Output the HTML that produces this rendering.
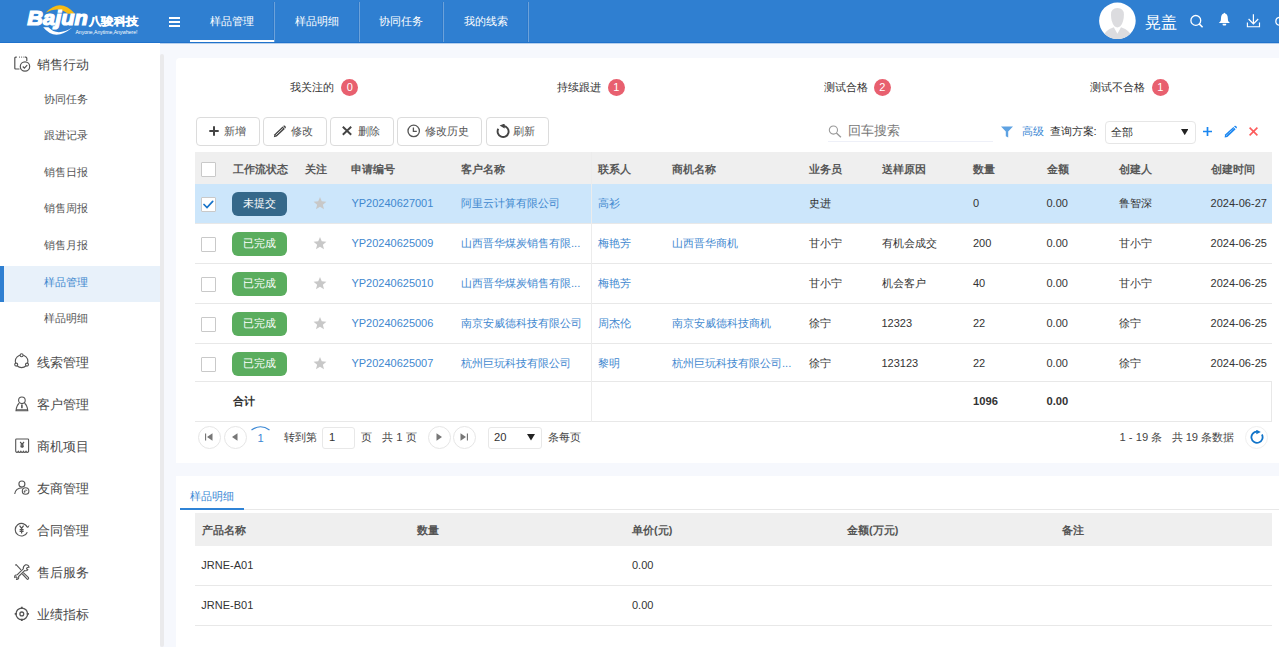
<!DOCTYPE html>
<html><head><meta charset="utf-8">
<style>
*{box-sizing:border-box;margin:0;padding:0}
html,body{width:1279px;height:647px;overflow:hidden;background:#f6f8fd;font-family:"Liberation Sans",sans-serif;font-size:12px;color:#333}
#hdr{position:absolute;left:0;top:0;width:1279px;height:43px;background:#2f7fd1}
#hdrb{position:absolute;left:0;top:42px;width:1279px;height:1px;background:#1f72cc}
#hdrs{position:absolute;left:0;top:43px;width:1279px;height:1px;background:#b7d0ec}
#side{position:absolute;left:0;top:43px;width:160px;height:604px;background:#fff}
.sb{position:absolute;left:160px;top:54px;width:3.6px;height:593px;background:#eaeaec;border-radius:2px}
.card{position:absolute;background:#fff;border-radius:4px}
.t{position:absolute;white-space:nowrap;line-height:1}
.tab{position:absolute;top:1px;height:41px;color:#fff;font-size:11.1px;line-height:41px;text-align:center}
.tsep{position:absolute;top:2px;width:1px;height:40px;background:#6ca2da;box-shadow:-1px 0 0 #2a77c9}
.mi{position:absolute;left:44px;font-size:11.45px;color:#555;line-height:1}
.gi{position:absolute;left:37px;font-size:12.8px;color:#4a4a4a;line-height:1}
.ico{position:absolute}
.btn{position:absolute;top:117px;height:29px;border:1px solid #dcdcdc;border-radius:4px;background:#fff;font-size:12px;color:#555;line-height:27px}
.badge{position:absolute;width:17px;height:17px;border-radius:50%;background:#e8606f;color:#fff;font-size:11px;line-height:17px;text-align:center}
.th{position:absolute;font-weight:bold;color:#555;font-size:12px;line-height:1}
.td{position:absolute;font-size:12px;color:#333;line-height:1}
.lk{color:#3f88cf}
.cb{position:absolute;width:15px;height:15px;border:1px solid #c9c9c9;border-radius:1px;background:#fff}
.st{position:absolute;width:55px;height:23.4px;border-radius:6px;color:#fff;font-size:12px;line-height:23.4px;text-align:center}
.hl{position:absolute;height:1px;background:#e8e8e8}
.pgb{position:absolute;width:22px;height:22px;border-radius:50%;border:1px solid #e6e6e6;background:#fff}
</style></head><body>

<div id="hdr"></div><div id="hdrb"></div><div id="hdrs"></div>
<svg style="position:absolute;left:20px;top:0" width="130" height="43" viewBox="0 0 130 43">
<path d="M25.7 12.85 Q40 -2.8 55 13.7 L48 13.7 Q38 5.5 25.7 12.85 Z" fill="#f7bb12"/>
<path d="M23.2 27.3 Q35 42 52.4 27.6 Q37 37 28.5 27.3 Z" fill="#fff"/>
<text x="7.3" y="25.4" font-family="Liberation Sans" font-weight="bold" font-style="italic" font-size="20" fill="#fff" stroke="#fff" stroke-width="1.2" textLength="60.5" lengthAdjust="spacingAndGlyphs">Bajun</text>
<text x="69" y="24.6" font-weight="bold" font-size="11" fill="#fff" stroke="#fff" stroke-width="0.3" textLength="49.5" lengthAdjust="spacingAndGlyphs">八骏科技</text>
<text x="55.5" y="34" font-size="5" fill="#fff" textLength="62" lengthAdjust="spacingAndGlyphs">Anyone,Anytime,Anywhere!</text>
</svg>
<div class="ico" style="left:169px;top:17px;width:11px;height:1.6px;background:#fff"></div>
<div class="ico" style="left:169px;top:21px;width:11px;height:1.6px;background:#fff"></div>
<div class="ico" style="left:169px;top:25px;width:11px;height:1.6px;background:#fff"></div>
<div class="tab" style="left:190.0px;width:84px">样品管理</div>
<div class="tsep" style="left:274px"></div>
<div class="tab" style="left:274.5px;width:84px">样品明细</div>
<div class="tsep" style="left:359px"></div>
<div class="tab" style="left:359.0px;width:84px">协同任务</div>
<div class="tsep" style="left:443px"></div>
<div class="tab" style="left:443.5px;width:84px">我的线索</div>
<div class="tsep" style="left:528px"></div>
<div class="ico" style="left:190px;top:40px;width:84px;height:2px;background:#fff"></div>
<svg style="position:absolute;left:1098px;top:2px" width="39" height="39" viewBox="0 0 39 39">
<defs><clipPath id="avc"><circle cx="19.4" cy="18.8" r="18.3"/></clipPath></defs>
<circle cx="19.4" cy="18.8" r="18.3" fill="#fff"/>
<path d="M13 12.5 Q13 6 19.4 6 Q25.9 6 25.9 12.5 Q25.9 20.5 22.3 24.3 Q19.4 26.6 16.5 24.3 Q13 20.5 13 12.5 Z" fill="#dcdcdf"/>
<path d="M3 40 L4 36 Q6.5 28.3 15.8 25.2 L19.4 31.8 L23 25.2 Q32.3 28.3 34.8 36 L35.8 40 Z" fill="#dcdcdf" clip-path="url(#avc)"/>
</svg>
<div class="t" style="left:1145px;top:13.5px;font-size:16.2px;color:#fff">晃盖</div>
<svg style="position:absolute;left:1189px;top:14px" width="16" height="16" viewBox="0 0 16 16">
<circle cx="6.8" cy="6.4" r="4.9" fill="none" stroke="#fff" stroke-width="1.3"/>
<path d="M10.2 9.9 L13.6 13.3" stroke="#fff" stroke-width="1.5"/></svg>
<svg style="position:absolute;left:1217px;top:12px" width="15" height="15" viewBox="0 0 15 15">
<path d="M7.4 0.7 Q7.9 0.7 8.1 1.5 Q10.6 2.4 10.8 6 L11 8.6 Q11.4 10 13 11.1 L1.8 11.1 Q3.4 10 3.8 8.6 L4 6 Q4.2 2.4 6.7 1.5 Q6.9 0.7 7.4 0.7 Z" fill="#fff"/>
<path d="M5.6 11.8 H9.2 V12.6 Q9.2 13.5 8.3 13.5 H6.5 Q5.6 13.5 5.6 12.6 Z" fill="#fff"/></svg>
<svg style="position:absolute;left:1246px;top:13px" width="15" height="16" viewBox="0 0 15 16">
<path d="M7.4 1.2 L7.4 10.8 M2.6 6 L7.4 10.8 L12.2 6" fill="none" stroke="#fff" stroke-width="1.2"/>
<path d="M1.4 9.6 L1.4 13.7 L13.5 13.7 L13.5 9.6" fill="none" stroke="#fff" stroke-width="1.15"/></svg>
<svg style="position:absolute;left:1274px;top:14px" width="5" height="14" viewBox="0 0 5 14">
<path d="M6.5 3.2 Q1.8 3.2 1.8 7.2 Q1.8 11.2 6.5 11.2" fill="none" stroke="#fff" stroke-width="1.2"/></svg>
<div id="side"></div><div class="sb"></div>
<div class="ico" style="left:0;top:266px;width:160px;height:35.7px;background:#e8f1fa"></div>
<div class="ico" style="left:0;top:266px;width:4px;height:35.7px;background:#2f7fd1"></div>
<div class="gi" style="top:59.3px">销售行动</div>
<div class="mi" style="top:93.8px;color:#555">协同任务</div>
<div class="mi" style="top:129.8px;color:#555">跟进记录</div>
<div class="mi" style="top:166.8px;color:#555">销售日报</div>
<div class="mi" style="top:202.8px;color:#555">销售周报</div>
<div class="mi" style="top:239.8px;color:#555">销售月报</div>
<div class="mi" style="top:276.8px;color:#3f88cf">样品管理</div>
<div class="mi" style="top:312.8px;color:#555">样品明细</div>
<div class="gi" style="top:357px">线索管理</div>
<div class="gi" style="top:399px">客户管理</div>
<div class="gi" style="top:441px">商机项目</div>
<div class="gi" style="top:483px">友商管理</div>
<div class="gi" style="top:525px">合同管理</div>
<div class="gi" style="top:567px">售后服务</div>
<div class="gi" style="top:609px">业绩指标</div>
<svg style="position:absolute;left:13px;top:55px" width="19" height="19" viewBox="0 0 19 19" fill="none" stroke="#555" stroke-width="1.2">
<path d="M6.5 14 H2.8 Q1.8 14 1.8 13 V3.2 Q1.8 2.2 2.8 2.2 H3.8"/><path d="M11.8 2.2 H12.8 Q13.8 2.2 13.8 3.2 V6"/>
<path d="M6 2.2 H6.8 M8.3 2.2 H9.1 M10.5 2.2 H11.2"/>
<circle cx="12" cy="11.5" r="4.7"/><path d="M9.8 11.5 L11.4 13.1 L14.2 10.2"/></svg>
<svg style="position:absolute;left:13px;top:353.3px" width="18" height="18" viewBox="0 0 18 18" fill="none" stroke="#555" stroke-width="1.1">
<circle cx="8.6" cy="8.3" r="6.3"/><circle cx="8.6" cy="2.3" r="1.5" fill="#fff"/><circle cx="3.2" cy="11.6" r="1.5" fill="#fff"/><circle cx="14" cy="11.6" r="1.5" fill="#fff"/></svg>
<svg style="position:absolute;left:13px;top:395.3px" width="18" height="18" viewBox="0 0 18 18" fill="none" stroke="#555" stroke-width="1.1">
<circle cx="8.9" cy="5.3" r="3.3"/><path d="M6.2 8.3 Q3.5 10.5 3 15.8 H14.8 Q14.3 10.5 11.6 8.3"/><path d="M3 14.8 H14.8"/><path d="M8.9 9.5 V13.2" stroke-width="1.6"/></svg>
<svg style="position:absolute;left:13px;top:437.3px" width="18" height="18" viewBox="0 0 18 18" fill="none" stroke="#555" stroke-width="1.1">
<path d="M2.7 14.4 V2.8 Q2.7 2 3.5 2 H14.8 Q15.6 2 15.6 2.8 V14.4 q-1.29 2.2 -2.58 0 q-1.29 2.2 -2.58 0 q-1.29 2.2 -2.58 0 q-1.29 2.2 -2.58 0 q-1.29 2.2 -2.58 0"/>
<path d="M7.2 5 L9.1 7.3 L11 5 M9.1 7.3 V11 M7.4 8.2 H10.8 M7.4 9.6 H10.8" stroke-width="1.2"/></svg>
<svg style="position:absolute;left:13px;top:479.3px" width="18" height="18" viewBox="0 0 18 18" fill="none" stroke="#555" stroke-width="1.1">
<circle cx="8.9" cy="5" r="3"/><path d="M1.7 15 Q2.5 9 9.5 8.8"/><circle cx="12.6" cy="12" r="3.3"/><path d="M11 12.5 Q12.2 10.4 14.2 11.3 M11.9 13.8 L11 12.5 L12.6 12.3" stroke-width="0.9"/></svg>
<svg style="position:absolute;left:13px;top:521.3px" width="18" height="18" viewBox="0 0 18 18" fill="none" stroke="#555" stroke-width="1.1">
<path d="M14.3 6.2 A6.3 6.3 0 1 0 14.3 11.2"/><path d="M13 4.3 L14.8 6.6 L15.9 4.5" stroke-width="1"/>
<path d="M6.6 4.6 L8.6 7.4 L10.6 4.6 M8.6 7.4 V12.6 M6.6 8.6 H10.6 M6.6 10.4 H10.6" stroke-width="1.2"/></svg>
<svg style="position:absolute;left:13px;top:563.3px" width="18" height="18" viewBox="0 0 18 18" fill="none" stroke="#555" stroke-width="1.1">
<path d="M2.2 2.3 L3.2 1.7 L8 6.8"/><path d="M10.3 9.6 L15.5 14.6 Q16 15.6 15 16.2 L14.4 16.4 L9.3 11"/>
<path d="M12.6 1.8 Q15.5 1.5 16 4.2 L14.2 4.4 L13.5 5.8 L14.8 6.7 Q13.7 8.3 11.6 7.6 L5.6 13.5 Q6.2 16.4 3.6 16.5 L4.2 14.8 L3.3 13.8 L1.7 14.4 Q1.3 11.7 4.3 11.7 L10.3 5.9 Q9.9 3.2 12.6 1.8 Z"/></svg>
<svg style="position:absolute;left:13px;top:605.3px" width="18" height="18" viewBox="0 0 18 18" fill="none" stroke="#555" stroke-width="1.3">
<circle cx="8.8" cy="8.9" r="5.8"/><circle cx="8.8" cy="8.9" r="1.9"/><path d="M8.8 1.8 V4 M8.8 13.8 V16 M1.7 8.9 H3.9 M13.7 8.9 H15.9" stroke-width="1.8"/></svg>
<div class="card" style="left:176.3px;top:58.3px;width:1110px;height:404.3px;border-radius:4px 4px 0 0"></div>
<div class="card" style="left:176.3px;top:475.6px;width:1110px;height:200px;border-radius:0"></div>
<div class="t" style="left:290px;top:81.5px;font-size:11.2px;color:#333">我关注的</div>
<div class="badge" style="left:341.2px;top:78.5px">0</div>
<div class="t" style="left:557px;top:81.5px;font-size:11.2px;color:#333">持续跟进</div>
<div class="badge" style="left:607.7px;top:78.5px">1</div>
<div class="t" style="left:823.5px;top:81.5px;font-size:11.2px;color:#333">测试合格</div>
<div class="badge" style="left:873.9px;top:78.5px">2</div>
<div class="t" style="left:1090px;top:81.5px;font-size:11.2px;color:#333">测试不合格</div>
<div class="badge" style="left:1151.7px;top:78.5px">1</div>
<div class="btn" style="left:196px;width:63.5px"></div>
<div class="t" style="left:224.4px;top:126px;font-size:11.2px;color:#555">新增</div>
<div class="btn" style="left:263px;width:63.5px"></div>
<div class="t" style="left:291.3px;top:126px;font-size:11.2px;color:#555">修改</div>
<div class="btn" style="left:330px;width:63.5px"></div>
<div class="t" style="left:357.9px;top:126px;font-size:11.2px;color:#555">删除</div>
<div class="btn" style="left:397px;width:84.5px"></div>
<div class="t" style="left:424.9px;top:126px;font-size:11.2px;color:#555">修改历史</div>
<div class="btn" style="left:485.5px;width:63.5px"></div>
<div class="t" style="left:513.3px;top:126px;font-size:11.2px;color:#555">刷新</div>
<svg style="position:absolute;left:208.5px;top:125.5px" width="10" height="10" viewBox="0 0 10 10"><path d="M5 0.3V9.7M0.3 5H9.7" stroke="#444" stroke-width="2"/></svg>
<svg style="position:absolute;left:273px;top:124.5px" width="14" height="13" viewBox="0 0 14 13"><path d="M0.8 12.3 L1.5 9.2 L9.6 1.6 L11.8 3.9 L3.7 11.5 Z" fill="#444"/><path d="M10.4 0.8 Q11.2 0.1 12 0.8 L12.6 1.5 Q13.3 2.3 12.6 3.1 L12.3 3.4 L10.1 1.1 Z" fill="#444"/><path d="M2.6 10.3 L9.9 3.4" stroke="#fff" stroke-width="0.8"/></svg>
<svg style="position:absolute;left:342px;top:126px" width="10" height="9.5" viewBox="0 0 10 9.5"><path d="M0.8 0.7L9.2 8.8M9.2 0.7L0.8 8.8" stroke="#444" stroke-width="1.9"/></svg>
<svg style="position:absolute;left:407px;top:124px" width="14" height="14" viewBox="0 0 14 14"><circle cx="6.7" cy="6.9" r="5.7" fill="none" stroke="#555" stroke-width="1.3"/><path d="M6.4 3.6V7.4H9.8" fill="none" stroke="#555" stroke-width="1.3"/></svg>
<svg style="position:absolute;left:495.5px;top:124px" width="15" height="15" viewBox="0 0 15 15"><path d="M2.3 4.8 A5.5 5.5 0 1 0 7.5 2" fill="none" stroke="#444" stroke-width="1.9"/><path d="M3.6 1.6 L8.6 -0.5 L8.6 4.6 Z" fill="#444"/></svg>
<svg style="position:absolute;left:828px;top:124.5px" width="14" height="13" viewBox="0 0 14 13"><circle cx="5.4" cy="5" r="4.1" fill="none" stroke="#999" stroke-width="1.05"/><path d="M8.4 8.1 L12.9 12.3" stroke="#999" stroke-width="1.4"/></svg>
<div class="t" style="left:848px;top:123.8px;font-size:13px;color:#777">回车搜索</div>
<div class="ico" style="left:828px;top:141px;width:165px;height:1px;background:#eef0f8"></div>
<svg style="position:absolute;left:1000.5px;top:125.5px" width="12" height="12" viewBox="0 0 12 12"><path d="M0 0.5 H12 L7.2 5.5 V11.5 L4.8 10.3 V5.5 Z" fill="#5ea2e2"/></svg>
<div class="t" style="left:1022px;top:125.5px;font-size:11.2px;color:#3a87d4">高级</div>
<div class="t" style="left:1049.5px;top:125.5px;font-size:11.2px;color:#333">查询方案:</div>
<div class="ico" style="left:1104.5px;top:120.5px;width:91px;height:23.5px;border:1px solid #e6e6e6;border-radius:4px;background:#fff"></div>
<div class="t" style="left:1111px;top:126.5px;font-size:11.2px;color:#333">全部</div>
<svg style="position:absolute;left:1180.6px;top:128.6px" width="7.5" height="6.2" viewBox="0 0 8 6.5" preserveAspectRatio="none"><path d="M0 0 H8 L4 6.5 Z" fill="#222"/></svg>
<svg style="position:absolute;left:1202.8px;top:127px" width="9" height="9" viewBox="0 0 9 9"><path d="M4.5 0V9M0 4.5H9" stroke="#1a86f0" stroke-width="1.7"/></svg>
<svg style="position:absolute;left:1223.5px;top:125px" width="13.5" height="13" viewBox="0 0 13.5 13"><path d="M0.6 12.4 L1.1 9.6 L9.4 1.9 L11.6 4.2 L3.4 11.9 Z" fill="#1a86f0"/><path d="M10.2 1.1 Q11 0.3 11.9 1 L12.5 1.6 Q13.3 2.5 12.5 3.3 L12.3 3.5 L10 1.3 Z" fill="#1a86f0"/><path d="M2.2 10.6 L9.9 3.4" stroke="#fff" stroke-width="0.7" stroke-dasharray="1 0.8"/></svg>
<svg style="position:absolute;left:1248.5px;top:127px" width="9" height="9" viewBox="0 0 9 9"><path d="M0.6 0.6L8.4 8.4M8.4 0.6L0.6 8.4" stroke="#fd5b5b" stroke-width="1.6"/></svg>
<div class="ico" style="left:195px;top:152px;width:1077px;height:32px;background:#efefef"></div>
<div class="ico" style="left:195px;top:184px;width:1077px;height:39.5px;background:#cce6fb"></div>
<div class="hl" style="left:195px;top:223px;width:1077px"></div>
<div class="hl" style="left:195px;top:263px;width:1077px"></div>
<div class="hl" style="left:195px;top:303px;width:1077px"></div>
<div class="hl" style="left:195px;top:343px;width:1077px"></div>
<div class="hl" style="left:195px;top:381px;width:1077px"></div>
<div class="hl" style="left:195px;top:421px;width:1077px"></div>
<div class="ico" style="left:591px;top:152px;width:1px;height:269.5px;background:#ececec"></div>
<div class="th" style="left:232.5px;top:164px;font-size:10.9px;color:#585858">工作流状态</div>
<div class="th" style="left:305px;top:164px;font-size:10.9px;color:#585858">关注</div>
<div class="th" style="left:351.4px;top:164px;font-size:10.9px;color:#585858">申请编号</div>
<div class="th" style="left:461px;top:164px;font-size:10.9px;color:#585858">客户名称</div>
<div class="th" style="left:598px;top:164px;font-size:10.9px;color:#585858">联系人</div>
<div class="th" style="left:672px;top:164px;font-size:10.9px;color:#585858">商机名称</div>
<div class="th" style="left:808.9px;top:164px;font-size:10.9px;color:#585858">业务员</div>
<div class="th" style="left:881.5px;top:164px;font-size:10.9px;color:#585858">送样原因</div>
<div class="th" style="left:973px;top:164px;font-size:10.9px;color:#585858">数量</div>
<div class="th" style="left:1046.5px;top:164px;font-size:10.9px;color:#585858">金额</div>
<div class="th" style="left:1119px;top:164px;font-size:10.9px;color:#585858">创建人</div>
<div class="th" style="left:1210.6px;top:164px;font-size:10.9px;color:#585858">创建时间</div>
<div class="cb" style="left:201px;top:162px"></div>
<div class="cb" style="left:201px;top:196.7px"></div>
<svg style="position:absolute;left:203px;top:199.7px" width="11" height="9" viewBox="0 0 11 9"><path d="M1 4.5 L4 7.5 L9.7 1.3" fill="none" stroke="#1673c9" stroke-width="1.7" stroke-linecap="round"/></svg>
<div class="st" style="left:232px;top:192.4px;background:#35688a;font-size:11.2px">未提交</div>
<svg style="position:absolute;left:312.5px;top:196.8px" width="14" height="13" viewBox="0 0 24 23"><path d="M12 0 L15.1 7.6 L23.4 8.3 L17.1 13.7 L19.1 21.8 L12 17.4 L4.9 21.8 L6.9 13.7 L0.6 8.3 L8.9 7.6 Z" fill="#c8c8c8"/></svg>
<div class="td lk" style="left:351.4px;top:198.3px;font-size:11.0px">YP20240627001</div>
<div class="td lk" style="left:461px;top:198.3px;font-size:11.2px">阿里云计算有限公司</div>
<div class="td lk" style="left:598px;top:198.3px;font-size:11.2px">高衫</div>
<div class="td lk" style="left:672px;top:198.3px;font-size:11.2px"></div>
<div class="td" style="left:808.9px;top:198.3px;font-size:11.2px">史进</div>
<div class="td" style="left:881.5px;top:198.3px;font-size:11.2px"></div>
<div class="td" style="left:973px;top:198.3px;font-size:11.0px">0</div>
<div class="td" style="left:1046.5px;top:198.3px;font-size:11.0px">0.00</div>
<div class="td" style="left:1119px;top:198.3px;font-size:11.2px">鲁智深</div>
<div class="td" style="left:1210.6px;top:198.3px;font-size:11.0px">2024-06-27</div>
<div class="cb" style="left:201px;top:236.7px"></div>
<div class="st" style="left:232px;top:232.4px;background:#5aad5e;font-size:11.2px">已完成</div>
<svg style="position:absolute;left:312.5px;top:236.8px" width="14" height="13" viewBox="0 0 24 23"><path d="M12 0 L15.1 7.6 L23.4 8.3 L17.1 13.7 L19.1 21.8 L12 17.4 L4.9 21.8 L6.9 13.7 L0.6 8.3 L8.9 7.6 Z" fill="#c8c8c8"/></svg>
<div class="td lk" style="left:351.4px;top:238.3px;font-size:11.0px">YP20240625009</div>
<div class="td lk" style="left:461px;top:238.3px;font-size:11.2px">山西晋华煤炭销售有限...</div>
<div class="td lk" style="left:598px;top:238.3px;font-size:11.2px">梅艳芳</div>
<div class="td lk" style="left:672px;top:238.3px;font-size:11.2px">山西晋华商机</div>
<div class="td" style="left:808.9px;top:238.3px;font-size:11.2px">甘小宁</div>
<div class="td" style="left:881.5px;top:238.3px;font-size:11.2px">有机会成交</div>
<div class="td" style="left:973px;top:238.3px;font-size:11.0px">200</div>
<div class="td" style="left:1046.5px;top:238.3px;font-size:11.0px">0.00</div>
<div class="td" style="left:1119px;top:238.3px;font-size:11.2px">甘小宁</div>
<div class="td" style="left:1210.6px;top:238.3px;font-size:11.0px">2024-06-25</div>
<div class="cb" style="left:201px;top:276.7px"></div>
<div class="st" style="left:232px;top:272.4px;background:#5aad5e;font-size:11.2px">已完成</div>
<svg style="position:absolute;left:312.5px;top:276.8px" width="14" height="13" viewBox="0 0 24 23"><path d="M12 0 L15.1 7.6 L23.4 8.3 L17.1 13.7 L19.1 21.8 L12 17.4 L4.9 21.8 L6.9 13.7 L0.6 8.3 L8.9 7.6 Z" fill="#c8c8c8"/></svg>
<div class="td lk" style="left:351.4px;top:278.3px;font-size:11.0px">YP20240625010</div>
<div class="td lk" style="left:461px;top:278.3px;font-size:11.2px">山西晋华煤炭销售有限...</div>
<div class="td lk" style="left:598px;top:278.3px;font-size:11.2px">梅艳芳</div>
<div class="td lk" style="left:672px;top:278.3px;font-size:11.2px"></div>
<div class="td" style="left:808.9px;top:278.3px;font-size:11.2px">甘小宁</div>
<div class="td" style="left:881.5px;top:278.3px;font-size:11.2px">机会客户</div>
<div class="td" style="left:973px;top:278.3px;font-size:11.0px">40</div>
<div class="td" style="left:1046.5px;top:278.3px;font-size:11.0px">0.00</div>
<div class="td" style="left:1119px;top:278.3px;font-size:11.2px">甘小宁</div>
<div class="td" style="left:1210.6px;top:278.3px;font-size:11.0px">2024-06-25</div>
<div class="cb" style="left:201px;top:316.7px"></div>
<div class="st" style="left:232px;top:312.4px;background:#5aad5e;font-size:11.2px">已完成</div>
<svg style="position:absolute;left:312.5px;top:316.8px" width="14" height="13" viewBox="0 0 24 23"><path d="M12 0 L15.1 7.6 L23.4 8.3 L17.1 13.7 L19.1 21.8 L12 17.4 L4.9 21.8 L6.9 13.7 L0.6 8.3 L8.9 7.6 Z" fill="#c8c8c8"/></svg>
<div class="td lk" style="left:351.4px;top:318.3px;font-size:11.0px">YP20240625006</div>
<div class="td lk" style="left:461px;top:318.3px;font-size:11.2px">南京安威德科技有限公司</div>
<div class="td lk" style="left:598px;top:318.3px;font-size:11.2px">周杰伦</div>
<div class="td lk" style="left:672px;top:318.3px;font-size:11.2px">南京安威德科技商机</div>
<div class="td" style="left:808.9px;top:318.3px;font-size:11.2px">徐宁</div>
<div class="td" style="left:881.5px;top:318.3px;font-size:11.0px">12323</div>
<div class="td" style="left:973px;top:318.3px;font-size:11.0px">22</div>
<div class="td" style="left:1046.5px;top:318.3px;font-size:11.0px">0.00</div>
<div class="td" style="left:1119px;top:318.3px;font-size:11.2px">徐宁</div>
<div class="td" style="left:1210.6px;top:318.3px;font-size:11.0px">2024-06-25</div>
<div class="cb" style="left:201px;top:356.7px"></div>
<div class="st" style="left:232px;top:352.4px;background:#5aad5e;font-size:11.2px">已完成</div>
<svg style="position:absolute;left:312.5px;top:356.8px" width="14" height="13" viewBox="0 0 24 23"><path d="M12 0 L15.1 7.6 L23.4 8.3 L17.1 13.7 L19.1 21.8 L12 17.4 L4.9 21.8 L6.9 13.7 L0.6 8.3 L8.9 7.6 Z" fill="#c8c8c8"/></svg>
<div class="td lk" style="left:351.4px;top:358.3px;font-size:11.0px">YP20240625007</div>
<div class="td lk" style="left:461px;top:358.3px;font-size:11.2px">杭州巨玩科技有限公司</div>
<div class="td lk" style="left:598px;top:358.3px;font-size:11.2px">黎明</div>
<div class="td lk" style="left:672px;top:358.3px;font-size:11.2px">杭州巨玩科技有限公司...</div>
<div class="td" style="left:808.9px;top:358.3px;font-size:11.2px">徐宁</div>
<div class="td" style="left:881.5px;top:358.3px;font-size:11.0px">123123</div>
<div class="td" style="left:973px;top:358.3px;font-size:11.0px">22</div>
<div class="td" style="left:1046.5px;top:358.3px;font-size:11.0px">0.00</div>
<div class="td" style="left:1119px;top:358.3px;font-size:11.2px">徐宁</div>
<div class="td" style="left:1210.6px;top:358.3px;font-size:11.0px">2024-06-25</div>
<div class="td" style="left:232.5px;top:396px;font-size:11.2px;font-weight:bold">合计</div>
<div class="td" style="left:973px;top:396px;font-size:11.2px;font-weight:bold">1096</div>
<div class="td" style="left:1046.5px;top:396px;font-size:11.2px;font-weight:bold">0.00</div>
<div class="pgb" style="left:198.2px;top:426px;width:23px;height:23px"></div>
<div class="pgb" style="left:223.5px;top:426px;width:23px;height:23px"></div>
<div class="pgb" style="left:427.5px;top:426px;width:23px;height:23px"></div>
<div class="pgb" style="left:453.1px;top:426px;width:23px;height:23px"></div>
<svg style="position:absolute;left:205.3px;top:433px" width="8" height="8" viewBox="0 0 8 8"><path d="M0.5 0.5V7.5" stroke="#777" stroke-width="1.3"/><path d="M7.5 0.3V7.7L2 4Z" fill="#777"/></svg>
<svg style="position:absolute;left:231.8px;top:433px" width="6" height="8" viewBox="0 0 6 8"><path d="M5.5 0.3V7.7L0 4Z" fill="#777"/></svg>
<svg style="position:absolute;left:435.8px;top:432.8px" width="6" height="8" viewBox="0 0 6 8"><path d="M0.5 0.3V7.7L6 4Z" fill="#777"/></svg>
<svg style="position:absolute;left:460.3px;top:432.8px" width="8" height="8" viewBox="0 0 8 8"><path d="M7.5 0.5V7.5" stroke="#777" stroke-width="1.3"/><path d="M0.5 0.3V7.7L6 4Z" fill="#777"/></svg>
<svg style="position:absolute;left:250px;top:424.5px" width="21" height="6" viewBox="0 0 21 6"><path d="M1.5 5 Q10.5 -1.5 19.5 5" fill="none" stroke="#3a87d4" stroke-width="1.2"/></svg>
<div class="td" style="left:257.5px;top:432.5px;font-size:11.2px;color:#3a87d4">1</div>
<div class="td" style="left:283.6px;top:432px;font-size:11.2px;color:#444">转到第</div>
<div class="ico" style="left:322px;top:426.5px;width:32.5px;height:22.5px;border:1px solid #e8e8e8;border-radius:3px"></div>
<div class="td" style="left:329px;top:432px;font-size:11.2px;color:#333">1</div>
<div class="td" style="left:360.8px;top:432px;font-size:11.2px;color:#444">页</div>
<div class="td" style="left:382.2px;top:432px;font-size:11.2px;color:#444">共 1 页</div>
<div class="ico" style="left:487.5px;top:426.5px;width:54.5px;height:22.5px;border:1px solid #e8e8e8;border-radius:3px"></div>
<div class="td" style="left:494px;top:432px;font-size:11.2px;color:#333">20</div>
<svg style="position:absolute;left:526.5px;top:434px" width="8" height="6.5" viewBox="0 0 8 6.5"><path d="M0 0 H8 L4 6.5 Z" fill="#222"/></svg>
<div class="td" style="left:548px;top:432px;font-size:11.2px;color:#444">条每页</div>
<div class="td" style="left:1119.5px;top:432px;font-size:11.2px;color:#444">1 - 19 条 &nbsp; 共 19 条数据</div>
<div class="pgb" style="left:1244.7px;top:425.5px;width:23.8px;height:23.8px;border-color:#efefef"></div>
<svg style="position:absolute;left:1249.5px;top:430.1px" width="14" height="14" viewBox="0 0 14 14"><path d="M11.9 4.5 A5.6 5.6 0 1 1 7 1.6" fill="none" stroke="#1174c9" stroke-width="1.8"/><path d="M6.3 -0.3 L10.8 1.9 L6.3 4.3 Z" fill="#1174c9"/></svg>
<div class="ico" style="left:1271px;top:381px;width:1px;height:40px;background:#e8e8e8"></div>
<div class="t" style="left:190px;top:491px;font-size:11.2px;color:#3a87d4">样品明细</div>
<div class="ico" style="left:179.5px;top:509px;width:1100px;height:1px;background:#e8e8e8"></div>
<div class="ico" style="left:179.5px;top:508px;width:64.5px;height:2px;background:#2f83d6"></div>
<div class="ico" style="left:195px;top:513px;width:1077px;height:32.5px;background:#efefef"></div>
<div class="th" style="left:201.7px;top:525px;font-size:10.9px">产品名称</div>
<div class="th" style="left:417px;top:525px;font-size:10.9px">数量</div>
<div class="th" style="left:632px;top:525px;font-size:10.9px">单价(元)</div>
<div class="th" style="left:847px;top:525px;font-size:10.9px">金额(万元)</div>
<div class="th" style="left:1062px;top:525px;font-size:10.9px">备注</div>
<div class="hl" style="left:195px;top:585px;width:1077px"></div>
<div class="hl" style="left:195px;top:625px;width:1077px"></div>
<div class="td" style="left:201.3px;top:560px;font-size:11.0px">JRNE-A01</div>
<div class="td" style="left:632px;top:560px;font-size:11.0px">0.00</div>
<div class="td" style="left:201.3px;top:600px;font-size:11.0px">JRNE-B01</div>
<div class="td" style="left:632px;top:600px;font-size:11.0px">0.00</div>
</body></html>
